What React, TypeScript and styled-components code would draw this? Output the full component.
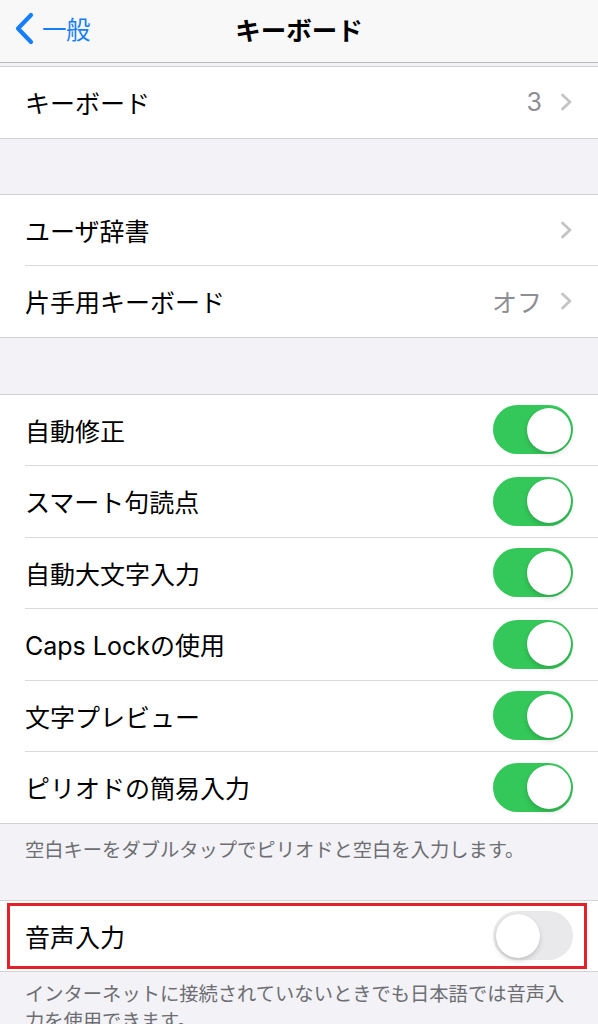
import React from 'react'
import styled, { createGlobalStyle } from 'styled-components'

const GlobalStyle = createGlobalStyle`
  html, body {
    margin: 0;
    padding: 0;
    background: #f2f2f7;
  }
  body {
    font-family: "Inter", "Noto Sans CJK JP", sans-serif;
    -webkit-font-smoothing: antialiased;
  }
`

const Screen = styled.div`
  width: 598px;
  height: 1024px;
  overflow: hidden;
  background: #f2f2f7;
`

const NavBar = styled.header`
  height: 63px;
  box-sizing: border-box;
  padding-bottom: 6px;
  background: #f8f8f8;
  border-bottom: 1px solid #b9b9bc;
  display: grid;
  grid-template-columns: 1fr auto 1fr;
  align-items: center;
`

const BackButton = styled.div`
  display: flex;
  align-items: center;
  gap: 8px;
  padding-left: 14px;
  color: #157efb;
  font-size: 24.5px;
  letter-spacing: -0.5px;
`

const Title = styled.h1`
  margin: 0;
  font-size: 25.5px;
  font-weight: 700;
  color: #000;
`

const Spacer = styled.div<{ $h: number }>`
  height: ${(p) => p.$h}px;
`

const Group = styled.section`
  background: #fff;
  border-top: 1px solid #d1d1d6;
  border-bottom: 1px solid #d1d1d6;
`

const Row = styled.div`
  position: relative;
  padding-left: 25px;

  &:not(:last-child) > div {
    border-bottom: 1px solid #d9d9dc;
  }
`

const RowInner = styled.div`
  height: 70.5px;
  display: flex;
  align-items: center;
  padding-right: 25px;
`

const Label = styled.span`
  flex: 1;
  font-size: 25px;
  color: #000;
`

const Value = styled.span`
  font-size: 25px;
  color: #8e8e93;
  margin-right: 18px;
`

const Track = styled.div<{ $on: boolean }>`
  width: 80px;
  height: 49px;
  border-radius: 25px;
  box-sizing: border-box;
  padding: 2.5px;
  display: flex;
  justify-content: ${(p) => (p.$on ? 'flex-end' : 'flex-start')};
  background: ${(p) => (p.$on ? '#34c759' : '#e9e9eb')};
`

const Knob = styled.div`
  width: 44px;
  height: 44px;
  border-radius: 50%;
  background: #fff;
  box-shadow: 0 3px 5px rgba(0, 0, 0, 0.15), 0 0 1px rgba(0, 0, 0, 0.12);
`

const Footer = styled.p<{ $top: number; $h: number }>`
  margin: 0;
  box-sizing: border-box;
  height: ${(p) => p.$h}px;
  padding: ${(p) => p.$top}px 25px 0;
  font-size: 19.3px;
  line-height: 27px;
  color: #6d6d72;
`

const Highlight = styled.div`
  position: absolute;
  top: 2px;
  bottom: 2px;
  left: 7px;
  right: 11px;
  border: 3px solid #e5202b;
  pointer-events: none;
`

const BackChevron = () => (
  <svg width="20" height="33" viewBox="0 0 20 33">
    <path d="M17 3 L4 16.5 L17 30" fill="none" stroke="#157efb" strokeWidth="4.2" strokeLinecap="round" strokeLinejoin="round" />
  </svg>
)

const Chevron = () => (
  <svg width="13" height="18" viewBox="0 0 13 18">
    <path d="M2.5 2 L10 9 L2.5 16" fill="none" stroke="#c4c4c7" strokeWidth="2.8" strokeLinecap="round" strokeLinejoin="round" />
  </svg>
)

const Toggle = ({ on }: { on: boolean }) => (
  <Track $on={on}>
    <Knob />
  </Track>
)

const toggles = ['自動修正', 'スマート句読点', '自動大文字入力', 'Caps Lockの使用', '文字プレビュー', 'ピリオドの簡易入力']

export default function App() {
  return (
    <Screen>
      <GlobalStyle />
      <NavBar>
        <BackButton>
          <BackChevron />
          一般
        </BackButton>
        <Title>キーボード</Title>
        <div />
      </NavBar>

      <Spacer $h={3} />
      <Group>
        <Row>
          <RowInner>
            <Label>キーボード</Label>
            <Value>3</Value>
            <Chevron />
          </RowInner>
        </Row>
      </Group>

      <Spacer $h={55} />
      <Group>
        <Row>
          <RowInner>
            <Label>ユーザ辞書</Label>
            <Chevron />
          </RowInner>
        </Row>
        <Row>
          <RowInner>
            <Label>片手用キーボード</Label>
            <Value>オフ</Value>
            <Chevron />
          </RowInner>
        </Row>
      </Group>

      <Spacer $h={56} />
      <Group>
        {toggles.map((t) => (
          <Row key={t}>
            <RowInner>
              <Label>{t}</Label>
              <Toggle on />
            </RowInner>
          </Row>
        ))}
      </Group>

      <Footer $top={13} $h={76}>空白キーをダブルタップでピリオドと空白を入力します。</Footer>

      <Group>
        <Row>
          <RowInner>
            <Label>音声入力</Label>
            <Toggle on={false} />
          </RowInner>
          <Highlight />
        </Row>
      </Group>

      <Footer $top={9} $h={120}>インターネットに接続されていないときでも日本語では音声入力を使用できます。</Footer>
    </Screen>
  )
}
